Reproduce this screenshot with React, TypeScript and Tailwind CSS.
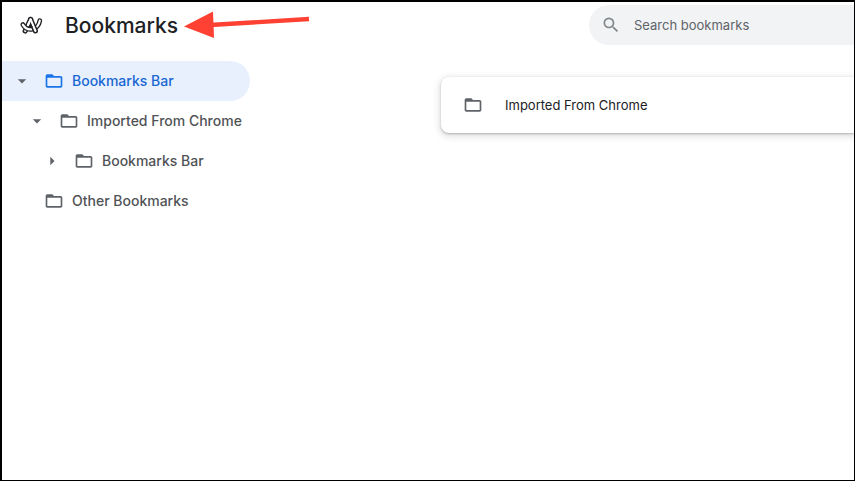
import { useState } from 'react';

type TreeItem = {
  title: string;
  indent: string;
  arrow: 'down' | 'right' | null;
};

const treeItems: TreeItem[] = [
  { title: 'Bookmarks Bar', indent: 'pl-0', arrow: 'down' },
  { title: 'Imported From Chrome', indent: 'pl-[15px]', arrow: 'down' },
  { title: 'Bookmarks Bar', indent: 'pl-[30px]', arrow: 'right' },
  { title: 'Other Bookmarks', indent: 'pl-0', arrow: null },
];

const FolderIcon = () => (
  <svg viewBox="0 0 24 24" className="w-5 h-5 shrink-0" fill="currentColor" aria-hidden="true">
    <path d="M20 6h-8l-2-2H4c-1.1 0-1.99.9-1.99 2L2 18c0 1.1.9 2 2 2h16c1.1 0 2-.9 2-2V8c0-1.1-.9-2-2-2zm0 12H4V8h16v10z" />
  </svg>
);

const ArcLogo = () => {
  const swoosh = 'M3.8 9.6C6 13.2 9.4 14.9 13.2 14.1C17.2 13.2 20 10.2 20.8 5.6';
  const leftLeg = 'M11.6 4.4L6.2 16';
  const rightLeg = 'M11.6 4.4L16.4 15.9';
  return (
    <svg viewBox="0 0 24 20" className="w-6 h-5 shrink-0" fill="none" strokeLinecap="round" strokeLinejoin="round" aria-hidden="true">
      <path d={leftLeg} stroke="#202124" strokeWidth="5.2" />
      <path d={leftLeg} stroke="#fff" strokeWidth="2.2" />
      <path d={swoosh} stroke="#202124" strokeWidth="4.8" />
      <path d={swoosh} stroke="#fff" strokeWidth="2.2" />
      <path d={rightLeg} stroke="#202124" strokeWidth="5.2" />
      <path d={rightLeg} stroke="#fff" strokeWidth="2.2" />
      <path d="M11.6 4.4L9.2 9.6" stroke="#fff" strokeWidth="2.2" />
      <path d="M11.6 9.6L10.4 12.2L12.8 12Z" fill="#202124" stroke="#202124" strokeWidth="1" />
    </svg>
  );
};

const App = () => {
  const [query, setQuery] = useState('');
  const [selected, setSelected] = useState(0);

  return (
    <div className="min-h-screen flex flex-col bg-white text-[#202124] border-t-2 border-l-2 border-r border-b border-black overflow-hidden font-['Inter','Liberation_Sans',sans-serif]">
      {/* Toolbar */}
      <header className="relative flex items-center h-[46px] pl-[17px]">
        <ArcLogo />
        <h1 className="ml-[22px] w-[524px] shrink-0 pt-0.5 text-[21px] leading-7 font-medium">Bookmarks</h1>
        <label className="flex flex-1 items-center h-10 min-w-0 pl-3 rounded-l-full bg-[#f1f3f4]">
          <svg viewBox="0 0 24 24" className="w-5 h-5 shrink-0" fill="#80868b" aria-hidden="true">
            <path d="M15.5 14h-.79l-.28-.27A6.471 6.471 0 0 0 16 9.5 6.5 6.5 0 1 0 9.5 16c1.61 0 3.09-.59 4.23-1.57l.27.28v.79l5 4.99L20.49 19l-4.99-5zm-6 0C7.01 14 5 11.99 5 9.5S7.01 5 9.5 5 14 7.01 14 9.5 11.99 14 9.5 14z" />
          </svg>
          <input
            type="text"
            aria-label="Search bookmarks"
            placeholder="Search bookmarks"
            value={query}
            onChange={(e) => setQuery(e.target.value)}
            className="ml-[13px] flex-1 min-w-0 text-[13px] leading-5 bg-transparent outline-none placeholder:text-[#5f6368]"
          />
        </label>

        {/* Red arrow pointing at the title */}
        <svg viewBox="0 0 126 30" className="absolute left-[182px] top-2 w-[126px] h-[30px] pointer-events-none" aria-hidden="true">
          <path d="M26 15L125 9" stroke="#ff4133" strokeWidth="4.4" />
          <path d="M0 16.5L29 1.5L30 28Z" fill="#ff4133" />
        </svg>
      </header>

      <div className="flex flex-1 pt-[13px]">
        {/* Folder tree */}
        <nav className="w-[248px] shrink-0">
          {treeItems.map((item, index) => (
            <button
              key={index}
              onClick={() => setSelected(index)}
              className={`flex items-center w-full h-10 rounded-r-full text-sm font-medium whitespace-nowrap ${item.indent} ${
                selected === index ? 'bg-[#e8f0fe]' : ''
              }`}
            >
              <span className="flex justify-center w-10 mr-0.5 shrink-0 text-[#5f6368]">
                {item.arrow && (
                  <svg viewBox="0 0 24 24" className="w-5 h-5" fill="currentColor" aria-hidden="true">
                    <path d={item.arrow === 'down' ? 'M7 10l5 5 5-5z' : 'M10 17l5-5-5-5z'} />
                  </svg>
                )}
              </span>
              <span className={`flex items-center gap-2 ${selected === index ? 'text-[#1a73e8]' : 'text-[#5f6368]'}`}>
                <FolderIcon />
                <span className={selected === index ? 'text-[#1967d2]' : 'text-[#505356]'}>{item.title}</span>
              </span>
            </button>
          ))}
        </nav>

        {/* Bookmark list */}
        <main className="flex-1 min-w-0 pl-[191px] pt-4">
          <ul className="py-2 rounded-l-lg bg-white shadow-[0_1px_2px_rgba(60,64,67,0.3),0_2px_6px_2px_rgba(60,64,67,0.15)]">
            <li className="flex items-center h-10 pl-[22px]">
              <span className="text-[#5f6368]">
                <FolderIcon />
              </span>
              <span className="ml-[22px] text-[13px] leading-5">Imported From Chrome</span>
            </li>
          </ul>
        </main>
      </div>
    </div>
  );
};

export default App;
